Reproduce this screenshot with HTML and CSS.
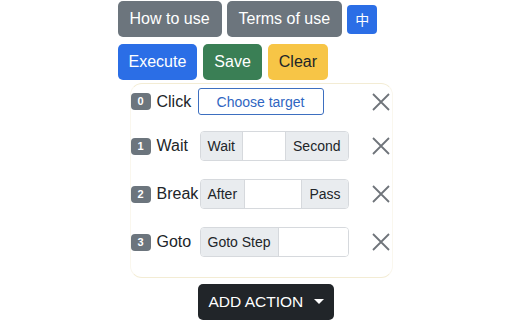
FILE: index.html
```html
<!DOCTYPE html>
<html>
<head>
	<title>Macro</title>
	<link rel="stylesheet" href="styles.css">
</head>
<body>
	<div class="wrap">
		<div class="toolbar top">
			<button class="btn btn-gray">How to use</button>
			<button class="btn btn-gray">Terms of use</button>
			<button class="btn btn-blue btn-sm">中</button>
		</div>
		<div class="toolbar">
			<button class="btn btn-blue">Execute</button>
			<button class="btn btn-green">Save</button>
			<button class="btn btn-yellow">Clear</button>
		</div>

		<div class="card">
			<div class="step first">
				<span class="badge">0</span>
				<span class="label">Click</span>
				<button class="btn-outline">Choose target</button>
				<span class="remove"><svg width="18" height="18" viewBox="0 0 18 18"><path d="M1 1L17 17M17 1L1 17" stroke="#6f747a" stroke-width="1.8" fill="none"/></svg></span>
			</div>
			<div class="step">
				<span class="badge">1</span>
				<span class="label">Wait</span>
				<div class="group">
					<span class="addon">Wait</span>
					<input class="field" type="text">
					<span class="addon">Second</span>
				</div>
				<span class="remove"><svg width="18" height="18" viewBox="0 0 18 18"><path d="M1 1L17 17M17 1L1 17" stroke="#6f747a" stroke-width="1.8" fill="none"/></svg></span>
			</div>
			<div class="step">
				<span class="badge">2</span>
				<span class="label">Break</span>
				<div class="group">
					<span class="addon">After</span>
					<input class="field" type="text">
					<span class="addon">Pass</span>
				</div>
				<span class="remove"><svg width="18" height="18" viewBox="0 0 18 18"><path d="M1 1L17 17M17 1L1 17" stroke="#6f747a" stroke-width="1.8" fill="none"/></svg></span>
			</div>
			<div class="step">
				<span class="badge">3</span>
				<span class="label">Goto</span>
				<div class="group">
					<span class="addon">Goto Step</span>
					<input class="field" type="text">
				</div>
				<span class="remove"><svg width="18" height="18" viewBox="0 0 18 18"><path d="M1 1L17 17M17 1L1 17" stroke="#6f747a" stroke-width="1.8" fill="none"/></svg></span>
			</div>
		</div>

		<div class="footer">
			<button class="btn btn-dark">ADD ACTION <span class="caret"></span></button>
		</div>
	</div>
</body>
</html>
```

FILE: styles.css
```css
body {
	margin: 0;
	padding: 0;
	background-color: #fff;
	font-family: "Liberation Sans", Arial, sans-serif;
	color: #212529;
}
.wrap {
	width: 277px;
	margin: 0 auto;
	padding-top: 1px;
}
.toolbar {
	display: flex;
	align-items: center;
	gap: 6px;
	margin-bottom: 7px;
}
.toolbar.top {
	gap: 5px;
}
.btn {
	height: 36px;
	padding: 0 11px;
	border: none;
	border-radius: 5px;
	color: #fff;
	font-family: inherit;
	font-size: 16px;
	cursor: pointer;
}
.toolbar.top .btn {
	padding: 0 12px;
}
.toolbar.top .btn-sm {
	height: 29px;
	padding: 0 8px;
	font-size: 14px;
	border-radius: 4px;
	font-family: "Noto Sans CJK SC", sans-serif;
}
.btn-gray {
	background-color: #6c757d;
}
.btn-blue {
	background-color: #2b6ee6;
}
.btn-green {
	background-color: #3a7f55;
}
.btn-yellow {
	background-color: #f7c546;
	color: #212529;
}
.btn-dark {
	background-color: #212529;
	padding: 0 10px;
	font-size: 15.5px;
}
.card {
	margin: -4px 0 0 12px;
	width: 263px;
	height: 195px;
	box-sizing: border-box;
	border: 1px solid #faf7ee;
	border-top-color: #f3ecd4;
	border-bottom-color: #f3ecd4;
	border-radius: 12px;
	padding: 4px 0 0 0;
}
.step {
	display: flex;
	align-items: center;
	height: 30px;
	margin-bottom: 18px;
}
.step.first {
	height: 27px;
	margin-bottom: 16px;
}
.badge {
	width: 20px;
	height: 17px;
	line-height: 17px;
	border-radius: 4px;
	background-color: #6c757d;
	color: #fff;
	font-size: 11px;
	font-weight: bold;
	text-align: center;
}
.label {
	width: 43px;
	margin-left: 6px;
	font-size: 16px;
}
.btn-outline {
	width: 126px;
	height: 27px;
	margin-left: -2px;
	background: #fff;
	border: 1px solid #3d6fc0;
	border-radius: 3px;
	color: #2f66c2;
	font-family: inherit;
	font-size: 14px;
}
.group {
	display: flex;
	width: 149px;
	height: 30px;
	border: 1px solid #d6d9dd;
	border-radius: 4px;
	box-sizing: border-box;
	overflow: hidden;
}
.addon {
	display: flex;
	align-items: center;
	padding: 0 7px;
	background-color: #e9ecef;
	font-size: 14px;
	color: #212529;
}
.field {
	flex: 1;
	min-width: 0;
	border: none;
	border-left: 1px solid #d6d9dd;
	border-right: 1px solid #d6d9dd;
	padding: 0;
	outline: none;
}
.group .field:last-child {
	border-right: none;
}
.remove {
	margin-left: auto;
	margin-right: 2px;
	display: flex;
}
.footer {
	display: flex;
	justify-content: center;
	padding-left: 20px;
	margin-top: 6px;
}
.caret {
	display: inline-block;
	margin-left: 6px;
	vertical-align: 3px;
	border-top: 5px solid #fff;
	border-left: 5px solid transparent;
	border-right: 5px solid transparent;
}
```
